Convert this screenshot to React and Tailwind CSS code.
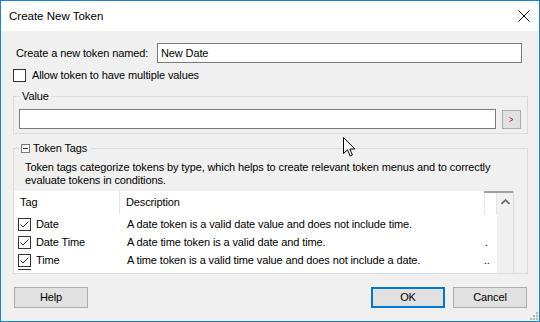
import React from "react";

function Check({ checked }) {
  return (
    <div className="w-[13px] h-[13px] border border-[#333333] bg-white flex items-center justify-center shrink-0">
      {checked && (
        <svg width="11" height="11" viewBox="0 0 11 11">
          <polyline points="1.5,5.5 4,8 9.5,2.5" fill="none" stroke="#333333" strokeWidth="1" />
        </svg>
      )}
    </div>
  );
}

function Btn({ children, primary, className = "" }) {
  return (
    <div
      className={
        "w-[74px] h-[21px] flex items-center justify-center bg-[#e1e1e1] " +
        (primary ? "border-2 border-[#0078d7] " : "border border-[#adadad] ") +
        className
      }
    >
      {children}
    </div>
  );
}

const rows = [
  { tag: "Date", desc: "A date token is a valid date value and does not include time." },
  { tag: "Date Time", desc: "A date time token is a valid date and time." },
  { tag: "Time", desc: "A time token is a valid time value and does not include a date." },
];

export default function App() {
  return (
    <div className="w-[540px] h-[322px] border border-[#1883d7] bg-[#f0f0f0] flex flex-col relative overflow-hidden text-[11px] leading-[13px] tracking-[-0.12px] text-black font-['Liberation_Sans',Arial,sans-serif]">
      {/* Title bar */}
      <div className="h-[30px] bg-white flex items-center justify-between pl-[8px] pr-[9px] shrink-0">
        <span className="text-[11.5px] tracking-normal">Create New Token</span>
        <svg width="12" height="12" viewBox="0 0 12 12">
          <path d="M0.5 0.5 L11.5 11.5 M11.5 0.5 L0.5 11.5" stroke="#000" strokeWidth="1" />
        </svg>
      </div>

      {/* Body */}
      <div className="flex-1 flex flex-col">
        {/* name row */}
        <div className="mt-[12px] flex items-center pl-[15px] h-[20px]">
          <span className="w-[141px]">Create a new token named:</span>
          <div className="w-[365px] h-[20px] border border-[#7a7a7a] bg-white flex items-center px-[3px]">
            New Date
          </div>
        </div>

        {/* allow multiple */}
        <div className="mt-[6px] flex items-center pl-[12px] h-[13px] gap-[6px]">
          <Check />
          <span>Allow token to have multiple values</span>
        </div>

        {/* Value group */}
        <fieldset className="mt-[8px] ml-[12px] w-[515px] border border-[#dcdcdc] pb-[4px] min-w-0">
          <legend className="ml-[6px] px-[2px] leading-[13px]">Value</legend>
          <div className="mt-[6px] flex items-center ml-[5px]">
            <div className="w-[477px] h-[20px] border border-[#7a7a7a] bg-white" />
            <div className="ml-[6px] w-[19px] h-[19px] border border-[#adadad] bg-[#e1e1e1] flex items-center justify-center">
              <svg width="5" height="5" viewBox="0 0 5 5">
                <path d="M0.5 0.5 L4 2.5 L0.5 4.5" fill="none" stroke="#8a3a3a" strokeWidth="1" />
              </svg>
            </div>
          </div>
        </fieldset>

        {/* Token Tags group */}
        <fieldset className="mt-[8px] ml-[12px] w-[515px] border border-[#dcdcdc] min-w-0">
          <legend className="ml-[5px] pl-[2px] pr-[4px] leading-[13px]">
            <span className="flex items-center gap-[3px] h-[13px]">
              <span className="w-[9px] h-[9px] border border-[#7a7a7a] bg-white flex items-center justify-center">
                <span className="w-[5px] h-px bg-[#333]" />
              </span>
              <span>Token Tags</span>
            </span>
          </legend>
          <div className="pt-[6px] pl-[11px] whitespace-nowrap">
            <div>Token tags categorize tokens by type, which helps to create relevant token menus and to correctly</div>
            <div>evaluate tokens in conditions.</div>
          </div>

          {/* list */}
          <div className="mt-[4px] w-[500px] h-[82px] flex overflow-hidden">
            <div className="w-[483px] bg-white flex flex-col">
              {/* header */}
              <div className="h-[24px] flex shrink-0">
                <div className="w-[106px] pl-[6px] flex items-center border-r border-[#e5e5e5] h-[23px]">Tag</div>
                <div className="flex-1 pl-[6px] flex items-center h-[23px]">Description</div>
              </div>
              {rows.map((r) => (
                <div key={r.tag} className="h-[18px] flex items-center shrink-0">
                  <div className="w-[107px] pl-[4px] flex items-center gap-[5px]">
                    <Check checked />
                    <span>{r.tag}</span>
                  </div>
                  <div className="flex-1 pl-[6px] whitespace-nowrap">{r.desc}</div>
                </div>
              ))}
              <div className="h-[18px] flex items-start pl-[4px] shrink-0">
                <div className="w-[13px] h-[2px] border-t border-[#333]" />
              </div>
            </div>
            {/* extra empty column */}
            <div className="w-[14px] bg-white flex flex-col">
              <div className="h-[2px] bg-[#a0a0a0] shrink-0" />
              <div className="h-[22px] border-l border-r border-[#e5e5e5] shrink-0" />
              <div className="h-[18px] shrink-0" />
              <div className="h-[18px] shrink-0 flex items-center leading-[18px] pl-px text-[#000]">.</div>
              <div className="h-[18px] shrink-0 flex items-center leading-[18px] text-[#000]">..</div>
            </div>
            {/* scrollbar */}
            <div className="w-[17px] bg-[#f0f0f0] border-r border-[#dcdcdc] flex flex-col">
              <div className="h-[2px] bg-[#a0a0a0]" />
              <div className="h-[18px] flex items-center justify-center">
                <svg width="9" height="6" viewBox="0 0 9 6">
                  <path d="M0.5 5 L4.5 1 L8.5 5" fill="none" stroke="#606060" strokeWidth="1.6" />
                </svg>
              </div>
            </div>
          </div>
        </fieldset>

        {/* buttons */}
        <div className="mt-[13px] flex items-center pl-[13px] pr-[12px]">
          <Btn>Help</Btn>
          <div className="flex-1" />
          <Btn primary>OK</Btn>
          <Btn className="ml-[8px]">Cancel</Btn>
        </div>
      </div>

      {/* size grip */}
      <svg className="absolute right-[1px] bottom-[1px]" width="10" height="10" viewBox="0 0 10 10">
        {[
          [8, 0], [8, 3], [5, 3], [8, 6], [5, 6], [2, 6],
        ].map(([x, y], i) => (
          <rect key={i} x={x} y={y + 2} width="2" height="2" fill="#b8b8b8" />
        ))}
      </svg>

      {/* mouse cursor */}
      <svg className="absolute left-[342px] top-[136px]" width="13" height="20" viewBox="0 0 13 20">
        <path d="M0.5 0.5 V16.5 L4.5 12.8 L7.2 19 L9.4 18 L6.8 12 H11.8 Z" fill="#fff" stroke="#000" strokeWidth="1" strokeLinejoin="miter" />
      </svg>
    </div>
  );
}
